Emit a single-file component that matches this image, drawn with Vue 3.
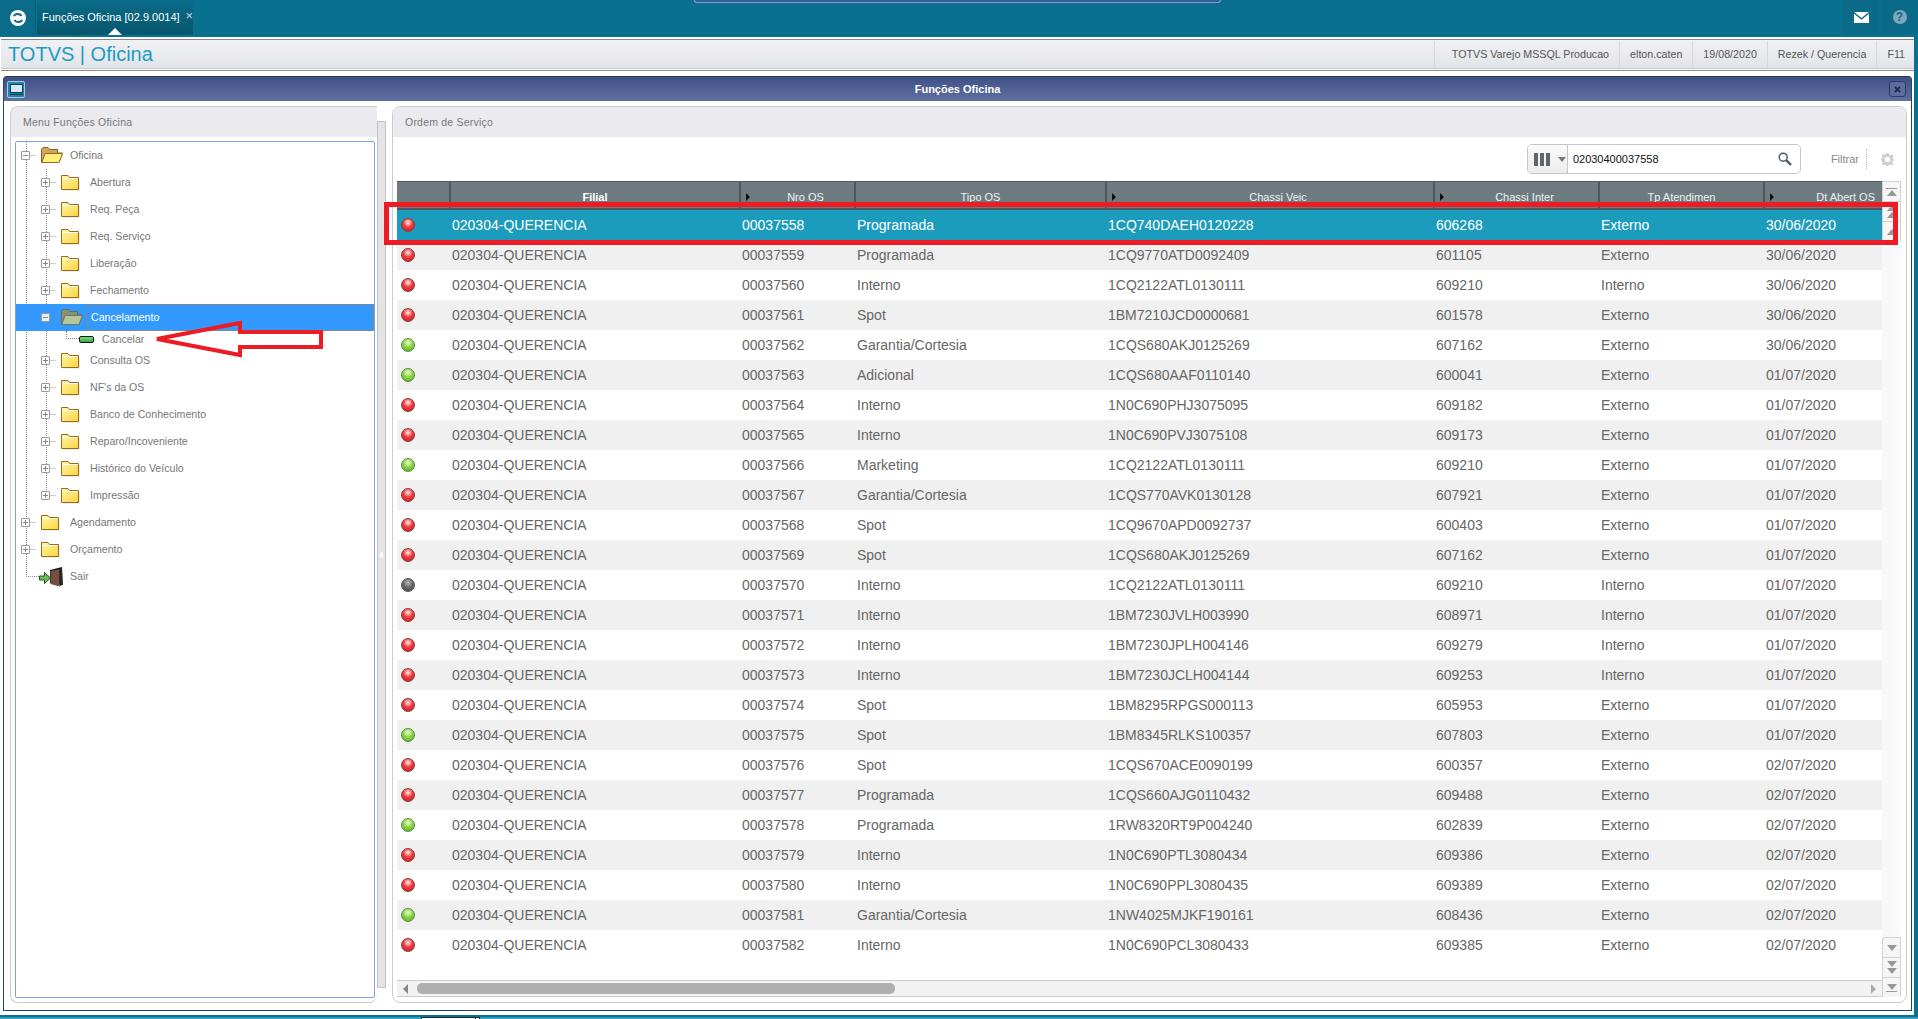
<script setup>
const statusItems = ['TOTVS Varejo MSSQL Producao', 'elton.caten', '19/08/2020', 'Rezek / Querencia', 'F11']

const tree = [
  { label: 'Oficina', level: 1, type: 'open', box: 'minus' },
  { label: 'Abertura', level: 2, type: 'folder', box: 'plus' },
  { label: 'Req. Peça', level: 2, type: 'folder', box: 'plus' },
  { label: 'Req. Serviço', level: 2, type: 'folder', box: 'plus' },
  { label: 'Liberação', level: 2, type: 'folder', box: 'plus' },
  { label: 'Fechamento', level: 2, type: 'folder', box: 'plus' },
  { label: 'Cancelamento', level: 2, type: 'open', box: 'minus', selected: true },
  { label: 'Cancelar', level: 3, type: 'leaf' },
  { label: 'Consulta OS', level: 2, type: 'folder', box: 'plus' },
  { label: "NF's da OS", level: 2, type: 'folder', box: 'plus' },
  { label: 'Banco de Conhecimento', level: 2, type: 'folder', box: 'plus' },
  { label: 'Reparo/Incoveniente', level: 2, type: 'folder', box: 'plus' },
  { label: 'Histórico do Veículo', level: 2, type: 'folder', box: 'plus' },
  { label: 'Impressão', level: 2, type: 'folder', box: 'plus' },
  { label: 'Agendamento', level: 1, type: 'folder', box: 'plus' },
  { label: 'Orçamento', level: 1, type: 'folder', box: 'plus' },
  { label: 'Sair', level: 1, type: 'exit' }
]

const columns = [
  { label: '', cls: '' },
  { label: 'Filial', cls: 'strong' },
  { label: 'Nro OS', cls: 'sorted' },
  { label: 'Tipo OS', cls: '' },
  { label: 'Chassi Veic', cls: 'sorted' },
  { label: 'Chassi Inter', cls: 'sorted' },
  { label: 'Tp Atendimen', cls: '' },
  { label: 'Dt Abert OS', cls: 'sorted last' }
]

const rows = [
  ['r', '00037558', 'Programada', '1CQ740DAEH0120228', '606268', 'Externo', '30/06/2020'],
  ['r', '00037559', 'Programada', '1CQ9770ATD0092409', '601105', 'Externo', '30/06/2020'],
  ['r', '00037560', 'Interno', '1CQ2122ATL0130111', '609210', 'Interno', '30/06/2020'],
  ['r', '00037561', 'Spot', '1BM7210JCD0000681', '601578', 'Externo', '30/06/2020'],
  ['g', '00037562', 'Garantia/Cortesia', '1CQS680AKJ0125269', '607162', 'Externo', '30/06/2020'],
  ['g', '00037563', 'Adicional', '1CQS680AAF0110140', '600041', 'Externo', '01/07/2020'],
  ['r', '00037564', 'Interno', '1N0C690PHJ3075095', '609182', 'Externo', '01/07/2020'],
  ['r', '00037565', 'Interno', '1N0C690PVJ3075108', '609173', 'Externo', '01/07/2020'],
  ['g', '00037566', 'Marketing', '1CQ2122ATL0130111', '609210', 'Externo', '01/07/2020'],
  ['r', '00037567', 'Garantia/Cortesia', '1CQS770AVK0130128', '607921', 'Externo', '01/07/2020'],
  ['r', '00037568', 'Spot', '1CQ9670APD0092737', '600403', 'Externo', '01/07/2020'],
  ['r', '00037569', 'Spot', '1CQS680AKJ0125269', '607162', 'Externo', '01/07/2020'],
  ['k', '00037570', 'Interno', '1CQ2122ATL0130111', '609210', 'Interno', '01/07/2020'],
  ['r', '00037571', 'Interno', '1BM7230JVLH003990', '608971', 'Interno', '01/07/2020'],
  ['r', '00037572', 'Interno', '1BM7230JPLH004146', '609279', 'Interno', '01/07/2020'],
  ['r', '00037573', 'Interno', '1BM7230JCLH004144', '609253', 'Interno', '01/07/2020'],
  ['r', '00037574', 'Spot', '1BM8295RPGS000113', '605953', 'Externo', '01/07/2020'],
  ['g', '00037575', 'Spot', '1BM8345RLKS100357', '607803', 'Externo', '01/07/2020'],
  ['r', '00037576', 'Spot', '1CQS670ACE0090199', '600357', 'Externo', '02/07/2020'],
  ['r', '00037577', 'Programada', '1CQS660AJG0110432', '609488', 'Externo', '02/07/2020'],
  ['g', '00037578', 'Programada', '1RW8320RT9P004240', '602839', 'Externo', '02/07/2020'],
  ['r', '00037579', 'Interno', '1N0C690PTL3080434', '609386', 'Externo', '02/07/2020'],
  ['r', '00037580', 'Interno', '1N0C690PPL3080435', '609389', 'Externo', '02/07/2020'],
  ['g', '00037581', 'Garantia/Cortesia', '1NW4025MJKF190161', '608436', 'Externo', '02/07/2020'],
  ['r', '00037582', 'Interno', '1N0C690PCL3080433', '609385', 'Externo', '02/07/2020']
]
</script>

<template>
  <div class="app">
    <header class="topbar">
      <button class="home" aria-label="Início">
        <svg width="18" height="18" viewBox="0 0 18 18">
          <circle cx="9" cy="9" r="8" fill="#fff" />
          <path d="M5 7.200C5.600 4.800 10.500 3.800 12.600 7" fill="none" stroke="#0a6c89" stroke-width="2" />
          <path d="M13 10.800C12.400 13.200 7.500 14.200 5.400 11" fill="none" stroke="#0a6c89" stroke-width="2" />
        </svg>
      </button>
      <div class="tab">
        <span>Funções Oficina [02.9.0014]</span>
        <span class="tab-x">×</span>
        <i class="tab-notch"></i>
      </div>
      <div class="top-spacer"></div>
      <button class="top-btn" aria-label="Mensagens">
        <svg width="15" height="11" viewBox="0 0 15 11">
          <path d="M0 0H15L7.500 6Z" fill="#fff" />
          <path d="M0 1.800V11H15V1.800L7.500 7.800Z" fill="#fff" />
        </svg>
      </button>
      <button class="top-btn help" aria-label="Ajuda"><span>?</span></button>
      <i class="top-sliver"></i>
    </header>

    <div class="main">
      <div class="statusbar">
        <div class="status-inner">
          <div class="brand">TOTVS | Oficina</div>
          <div class="status-items">
            <span v-for="s in statusItems" :key="s" class="status-item">{{ s }}</span>
          </div>
        </div>
      </div>

      <section class="window">
        <div class="titlebar">
          <span class="win-icon">
            <svg width="13" height="11" viewBox="0 0 13 11">
              <rect x="0.500" y="0.500" width="12" height="8" fill="#d5e9f1" stroke="#0c3f58" />
              <path d="M0 10.500H13" stroke="#0c3f58" stroke-width="1.400" />
            </svg>
          </span>
          <span class="win-title">Funções Oficina</span>
          <span class="win-close">
            <svg width="7" height="7" viewBox="0 0 7 7"><path d="M1 1 6 6M6 1 1 6" stroke="#1d2b4d" stroke-width="1.800" /></svg>
          </span>
        </div>

        <div class="win-body">
          <aside class="panel left">
            <div class="panel-head">Menu Funções Oficina</div>
            <div class="tree">
              <div
                v-for="n in tree"
                :key="n.label"
                class="node"
                :class="['lv' + n.level, 't-' + n.type, { selected: n.selected }]"
              >
                <span v-if="n.box" class="exp" :class="n.box"></span>
                <i v-if="n.box" class="dash"></i>
                <i v-if="n.type === 'leaf' || n.type === 'exit'" class="elbow"></i>

                <span v-if="n.type === 'folder'" class="slot">
                  <svg width="19" height="17" viewBox="0 0 19 17">
                    <defs>
                      <linearGradient id="fy" x1="0" y1="0" x2="1" y2="1">
                        <stop offset="0" stop-color="#fff6a8" />
                        <stop offset="1" stop-color="#fbd53e" />
                      </linearGradient>
                    </defs>
                    <path d="M2 16.500H18.500V5H2Z" fill="#b9b0a0" opacity=".45" />
                    <path d="M.5 15.500V1.500H7L8.500 3.500H17.500V15.500Z" fill="url(#fy)" stroke="#9a6a1c" />
                    <path d="M1.500 4.500H16.500" stroke="#fff" />
                  </svg>
                </span>

                <span v-else-if="n.type === 'open'" class="slot">
                  <svg v-if="!n.selected" width="22" height="17" viewBox="0 0 22 17">
                    <path d="M.5 15.500V2L2 .5H7L8.500 2.500H16.500V6H21.500L18 15.500Z" fill="#d2a55d" stroke="#8a6224" />
                    <path d="M.8 15.500 4 6.500H21.500L18 15.500Z" fill="#fff07a" stroke="#9a6a1c" />
                  </svg>
                  <svg v-else width="22" height="17" viewBox="0 0 22 17">
                    <path d="M.5 15.500V2L2 .5H7L8.500 2.500H16.500V6H21.500L18 15.500Z" fill="#8e8f70" stroke="#666a58" />
                    <path d="M.8 15.500 4 6.500H21.500L18 15.500Z" fill="#b3c79a" stroke="#70755e" />
                  </svg>
                </span>

                <span v-else-if="n.type === 'leaf'" class="leaf-ico"></span>

                <span v-else-if="n.type === 'exit'" class="slot exit">
                  <svg width="24" height="20" viewBox="0 0 24 20">
                    <path d="M11 3 23 0 24 18 11 16Z" fill="#1f1a18" />
                    <path d="M11.500 4 20.500 2.200V19.500L11.500 17Z" fill="#73503f" />
                    <path d="M20.500 2.200 23 1V18L20.500 19.500Z" fill="#2c2622" />
                    <path d="M.5 9H5.500V5.500L11.500 11 5.500 16.500V13H.5Z" fill="#6cbb55" stroke="#1e5a22" />
                  </svg>
                </span>

                <span class="label">{{ n.label }}</span>
              </div>
            </div>
          </aside>

          <div class="rail"><i class="rail-arrow"></i></div>

          <section class="panel right">
            <div class="panel-head">Ordem de Serviço</div>
            <div class="toolbar">
              <div class="search">
                <div class="search-btn">
                  <span class="bars"><i></i><i></i><i></i></span>
                  <i class="caret"></i>
                </div>
                <span class="search-text">02030400037558</span>
                <svg class="lens" width="14" height="14" viewBox="0 0 14 14">
                  <circle cx="5.200" cy="5.200" r="4" fill="none" stroke="#4c5a64" stroke-width="1.500" />
                  <path d="M8.200 8.200 13 13" stroke="#4c5a64" stroke-width="2.400" />
                </svg>
              </div>
              <span class="filter">Filtrar</span>
              <svg class="gear" width="13" height="13" viewBox="0 0 13 13">
                <path d="M5.300 0H7.700L8 1.800 9.400 2.400 10.900 1.300 12.600 3 11.500 4.500 12.100 5.900 13 6.200V7.600L11.900 8.100 11.300 9.500 12.200 11 10.500 12.400 9 11.500 7.800 12 7.500 13H5.500L5.100 12 3.900 11.500 2.300 12.400.7 10.800 1.600 9.400 1 8 0 7.700V5.600L1 5.200 1.600 3.900.7 2.500 2.300.9 3.900 1.800 5 1.300Z" fill="#cfcfcf" />
                <circle cx="6.500" cy="6.500" r="2.700" fill="#fff" />
              </svg>
            </div>

            <div class="grid-wrap">
              <div class="grid-col">
                <div class="grid">
                  <div class="row head">
                    <div v-for="(c, i) in columns" :key="i" class="th" :class="c.cls">{{ c.label }}</div>
                  </div>
                  <div
                    v-for="(r, i) in rows"
                    :key="r[1]"
                    class="row"
                    :class="{ active: i === 0, alt: i % 2 === 1 }"
                  >
                    <div class="td"><span class="dot" :class="r[0]"></span></div>
                    <div class="td">020304-QUERENCIA</div>
                    <div v-for="(v, k) in r.slice(1)" :key="k" class="td">{{ v }}</div>
                  </div>
                </div>
                <div class="hscroll">
                  <i class="arr-l"></i>
                  <div class="thumb"></div>
                  <i class="arr-r"></i>
                </div>
              </div>

              <div class="vscroll">
                <div class="vgroup">
                  <div class="vbtn top"><i class="bar"></i><i class="up"></i></div>
                  <div class="vbtn"><i class="up"></i><i class="up"></i></div>
                  <div class="vbtn"><i class="up"></i></div>
                </div>
                <div class="vgroup">
                  <div class="vbtn"><i class="down"></i></div>
                  <div class="vbtn"><i class="down"></i><i class="down"></i></div>
                  <div class="vbtn"><i class="down"></i><i class="bar"></i></div>
                </div>
              </div>
            </div>
          </section>
        </div>
      </section>
    </div>

    <footer class="footer">
      <i class="foot-a"></i><i class="foot-b"></i>
    </footer>

    <div class="mark-rect"></div>
    <svg class="mark-arrow" width="176" height="44" viewBox="150 318 176 44">
      <polygon points="157,339 240,323 240,332 321,332 321,347 240,347 240,355" fill="none" stroke="#ed1c24" stroke-width="4" />
    </svg>
  </div>
</template>

<style>
html, body { margin: 0; padding: 0; background: #fff; overflow: hidden; }
</style>

<style scoped>
* { box-sizing: border-box; }
i { display: block; }
button { border: 0; padding: 0; margin: 0; background: none; }

.app {
  position: relative;
  width: 1918px;
  height: 1019px;
  display: flex;
  flex-direction: column;
  font-family: "Liberation Sans", Arial, sans-serif;
  background: #fff;
  overflow: hidden;
}

/* top bar */
.topbar {
  position: relative;
  flex: none;
  height: 37px;
  display: flex;
  background: #0a7090;
}
.home {
  width: 36px;
  height: 35px;
  display: flex;
  align-items: center;
  justify-content: center;
  background: #0a6c89;
  border-right: 1px solid #0a5f79;
}
.tab {
  position: relative;
  margin-left: 1px;
  width: 156px;
  height: 35px;
  display: flex;
  align-items: center;
  padding: 0 0 1px 5px;
  background: linear-gradient(#0a6c8a, #07566c);
  color: #fff;
  font-size: 11px;
  white-space: nowrap;
}
.tab-x { margin-left: 6px; margin-top: -3px; color: #c9dbe2; font-size: 13px; }
.tab-notch {
  position: absolute;
  left: 71px;
  bottom: 0;
  width: 0; height: 0;
  border-left: 7px solid transparent;
  border-right: 7px solid transparent;
  border-bottom: 7px solid #fff;
}
.top-spacer { flex: 1; }
.top-btn {
  width: 36px;
  height: 34px;
  margin-right: 2px;
  display: flex;
  align-items: center;
  justify-content: center;
  background: #0a6a87;
}
.top-btn.help { margin-right: 0; width: 37px; }
.help span {
  width: 14px; height: 14px;
  border-radius: 50%;
  background: #7ea9b9;
  color: #0a6a87;
  font: bold 12px/14px "Liberation Sans", sans-serif;
  text-align: center;
}
.top-sliver {
  position: absolute;
  left: 694px;
  top: 0;
  width: 527px;
  height: 3px;
  background: #2f5f9d;
  border: 1px solid #8a9fc0;
  border-top: 0;
  border-radius: 0 0 3px 3px;
}

/* main column */
.main {
  flex: 1;
  min-height: 0;
  display: flex;
  flex-direction: column;
  border-right: 4px solid #0a7090;
}
.statusbar {
  flex: none;
  margin: 2px 0 5px 1px;
  height: 32px;
  padding-bottom: 1px;
  background: #fff;
  border-top: 1px solid #888;
  border-bottom: 1px solid #888;
}
.status-inner {
  height: 29px;
  display: flex;
  align-items: center;
  justify-content: space-between;
  background: linear-gradient(#f0f1f5, #e2e5e8);
  border-bottom: 1px solid #c8c8c8;
}
.brand {
  padding-left: 7px;
  color: #1f9cc2;
  font-size: 20px;
  line-height: 26px;
}
.status-items { display: flex; height: 26px; align-items: stretch; }
.status-item {
  display: flex;
  align-items: center;
  padding: 0 10px;
  border-left: 1px solid #d5d7da;
  color: #555;
  font-size: 10.700px;
  white-space: nowrap;
}
.status-item:first-child { padding-left: 17px; }
.status-item:last-child { padding-right: 9px; }

/* window */
.window {
  flex: 1;
  min-height: 0;
  margin: 0 2px 4px 3px;
  display: flex;
  flex-direction: column;
  border: 1px solid #17486f;
  border-top-color: #333;
  border-radius: 4px 4px 0 0;
  background: #fff;
}
.titlebar {
  position: relative;
  flex: none;
  height: 24px;
  display: flex;
  align-items: center;
  justify-content: center;
  background: linear-gradient(#3e5189, #616f9f);
}
.win-title { color: #fff; font-size: 11px; font-weight: bold; }
.win-icon {
  position: absolute;
  left: 3px;
  top: 4px;
  width: 18px; height: 17px;
  display: flex; align-items: center; justify-content: center;
  background: #1b88ab;
  border: 1px solid #a9cddb;
  border-radius: 2px;
}
.win-close {
  position: absolute;
  right: 5px;
  top: 4px;
  width: 17px; height: 16px;
  display: flex; align-items: center; justify-content: center;
  background: #5d6c9d;
  border: 1px solid #2b3b68;
  border-radius: 3px;
}
.win-body {
  flex: 1;
  min-height: 0;
  display: flex;
  padding: 5px 4px 7px 6px;
}

.panel {
  display: flex;
  flex-direction: column;
  border: 1px solid #ccc;
  border-radius: 8px;
  background: #fff;
}
.panel-head {
  flex: none;
  height: 30px;
  padding-left: 12px;
  display: flex;
  align-items: center;
  background: #ebebef;
  border-radius: 7px 7px 0 0;
  color: #777;
  font-size: 10.500px;
  letter-spacing: .02em;
}
.left { width: 367px; flex: none; border-right: 0; border-top-right-radius: 0; }
.left .panel-head { border-top-right-radius: 0; }
.right { width: 1515px; flex: none; margin-left: 6px; }

/* tree */
.tree {
  position: relative;
  flex: 1;
  margin: 4px 2px 4px 4px;
  border: 1px solid #7ba3e6;
  border-radius: 2px;
  background: #fff;
}
.tree::before {
  content: "";
  position: absolute;
  left: 10px;
  top: 0;
  height: 435px;
  border-left: 1px dotted #888;
}
.tree::after {
  content: "";
  position: absolute;
  left: 30px;
  top: 27px;
  height: 327px;
  border-left: 1px dotted #888;
}
.node {
  position: relative;
  z-index: 1;
  height: 27px;
  display: flex;
  align-items: center;
  color: #777;
  font-size: 10.600px;
  white-space: nowrap;
}
.label { margin-top: -1px; }
.lv1 { padding-left: 5px; }
.lv2 { padding-left: 25px; }
.exp {
  position: relative;
  flex: none;
  width: 9px;
  height: 9px;
  border: 1px solid #999;
  background: #fff;
  border-radius: 1px;
}
.exp::before {
  content: "";
  position: absolute;
  left: 1px; top: 3px;
  width: 5px; height: 1px;
  background: #888;
}
.exp.plus::after {
  content: "";
  position: absolute;
  left: 3px; top: 1px;
  width: 1px; height: 5px;
  background: #888;
}
.dash {
  flex: none;
  width: 11px;
  height: 0;
  border-top: 1px dotted #888;
  transform: scaleX(.55);
  transform-origin: left;
}
.slot { flex: none; width: 29px; display: flex; align-items: center; }
.t-leaf {
  height: 16px;
  padding-left: 50px;
}
.t-leaf .elbow {
  flex: none;
  width: 13px;
  height: 8px;
  margin-top: -8px;
  border-left: 1px dotted #888;
  border-bottom: 1px dotted #888;
}
.leaf-ico {
  flex: none;
  width: 15px;
  height: 7px;
  margin-right: 8px;
  border: 1px solid #111;
  border-radius: 2px;
  background: linear-gradient(#7fe06f, #2fa84c);
}
.t-exit { padding-left: 10px; }
.t-exit .elbow {
  flex: none;
  width: 13px;
  height: 0;
  border-top: 1px dotted #888;
}
.exit { width: 31px; }
.selected { background: #3399ff; color: #fff; }
.selected .label {
  flex: 1;
  align-self: stretch;
  display: flex;
  align-items: center;
  margin: 0 0 0 -3px;
  padding: 0 0 1px 3px;
  border: 1px dotted #c77c1e;
}
.selected .exp { background: #e6eef6; }

/* rail */
.rail {
  position: relative;
  flex: none;
  width: 9px;
  margin-top: 15px;
  margin-bottom: 15px;
  background: #e4e4e4;
  border: 1px solid #c4c4c4;
}
.rail-arrow {
  position: absolute;
  left: 1px;
  top: 429px;
  width: 0; height: 0;
  border-top: 4px solid transparent;
  border-bottom: 4px solid transparent;
  border-right: 4px solid #fff;
}

/* right panel */
.toolbar {
  flex: none;
  height: 44px;
  display: flex;
  align-items: center;
  justify-content: flex-end;
  padding-right: 12px;
}
.search {
  width: 274px;
  height: 30px;
  display: flex;
  align-items: center;
  border: 1px solid #c6c6c6;
  border-radius: 5px;
  background: #fff;
}
.search-btn {
  width: 40px;
  height: 100%;
  flex: none;
  display: flex;
  align-items: center;
  padding-left: 6px;
  gap: 8px;
  border-right: 1px solid #c6c6c6;
  border-radius: 4px 0 0 4px;
  background: linear-gradient(#fafafa, #ececec);
}
.bars { display: flex; gap: 2px; }
.bars i { width: 4px; height: 13px; background: #5d6770; }
.caret {
  width: 0; height: 0;
  border-left: 4px solid transparent;
  border-right: 4px solid transparent;
  border-top: 5px solid #6f7a82;
}
.search-text { flex: 1; padding-left: 5px; color: #111; font-size: 11px; }
.lens { margin-right: 8px; }
.filter {
  margin-left: 30px;
  padding-right: 7px;
  color: #888;
  font-size: 11px;
  line-height: 16px;
  height: 20px;
  display: flex;
  align-items: center;
  border-right: 1px dotted #bbb;
}
.gear { margin-left: 14px; }

.grid-wrap {
  flex: 1;
  min-height: 0;
  display: flex;
  padding: 0 5px 5px 4px;
}
.grid-col {
  width: 1485px;
  flex: none;
  display: flex;
  flex-direction: column;
}
.grid { flex: 1; min-height: 0; }
.row {
  display: grid;
  grid-template-columns: 52px 290px 115px 251px 328px 165px 165px 119px;
  height: 30px;
  color: #666;
  font-size: 14px;
  align-items: center;
}
.row.alt { background: #f0f0f0; }
.row.active { background: #1c9cbd; color: #fff; }
.td { padding-left: 3px; white-space: nowrap; }
.td:first-child { padding-left: 4px; display: flex; }
.dot {
  width: 14px;
  height: 14px;
  border-radius: 50%;
  border: 1px solid #777;
}
.dot.r { background: radial-gradient(circle at 50% 30%, #ffc9c9 0 10%, #ee3a3f 45%, #c41a20 100%); border-color: #8a3a3c; }
.dot.g { background: radial-gradient(circle at 50% 30%, #d9f7b3 0 10%, #80d040 50%, #5aa828 100%); border-color: #5f8c44; }
.dot.k { background: radial-gradient(circle at 50% 30%, #a8a8a8 0 10%, #646464 50%, #474747 100%); border-color: #555; }

.row.head {
  height: 29px;
  background: #6e7b80;
  border-top: 1px solid #4f5a5f;
  border-bottom: 2px solid #4d585c;
  align-items: stretch;
}
.th {
  display: flex;
  align-items: center;
  justify-content: center;
  position: relative;
  padding-top: 3px;
  color: #eef1f2;
  font-size: 11px;
  border-left: 2px solid #4d585c;
  white-space: nowrap;
}
.th:first-child { border-left: 0; }
.th.strong { font-weight: bold; color: #fff; }
.th.sorted { padding-left: 16px; }
.th.sorted::before {
  content: "";
  position: absolute;
  left: 5px;
  top: 11px;
  width: 0; height: 0;
  border-top: 4px solid transparent;
  border-bottom: 4px solid transparent;
  border-left: 4px solid #111;
}
.th.last { justify-content: flex-end; padding-right: 7px; }

.hscroll {
  flex: none;
  height: 17px;
  display: flex;
  align-items: center;
  padding: 0 6px;
  background: #f2f2f2;
  border-top: 1px solid #ccc;
  border-bottom: 1px solid #ccc;
}
.arr-l, .arr-r {
  width: 0; height: 0;
  border-top: 5px solid transparent;
  border-bottom: 5px solid transparent;
}
.arr-l { border-right: 5px solid #888; }
.arr-r { border-left: 5px solid #aaa; margin-left: auto; }
.thumb {
  width: 478px;
  height: 11px;
  margin-left: 9px;
  border-radius: 5px;
  background: #b0b0b0;
}
.vscroll {
  width: 19px;
  flex: none;
  display: flex;
  flex-direction: column;
  justify-content: space-between;
  background: linear-gradient(90deg, #f7f7fa, #fbfbfd);
}
.vbtn {
  width: 19px;
  height: 20px;
  display: flex;
  flex-direction: column;
  align-items: center;
  justify-content: center;
  gap: 1px;
  border: 1px solid #d2d2d2;
  border-width: 1px 1px 0 1px;
  background: #f6f6f6;
}
.vgroup:last-child .vbtn:first-child { border-radius: 4px 0 0 0; }
.up, .down {
  width: 0; height: 0;
  border-left: 5px solid transparent;
  border-right: 5px solid transparent;
}
.up { border-bottom: 6px solid #999; }
.down { border-top: 6px solid #999; }
.bar { width: 11px; height: 1px; background: #999; }

/* footer */
.footer {
  flex: none;
  height: 4px;
  display: flex;
  padding-left: 421px;
  background: linear-gradient(#0a7090 0 50%, #2f9dbd 50%);
}
.foot-a { width: 55px; height: 2px; margin-top: 2px; border: 1px solid #1a2630; border-bottom: 0; background: #fff; }
.foot-b { width: 4px; height: 2px; margin-top: 2px; border: 1px solid #1a2630; border-bottom: 0; border-left: 0; background: #fff; }

/* annotations drawn over the screenshot */
.mark-rect {
  position: absolute;
  left: 384px;
  top: 202px;
  width: 1514px;
  height: 43px;
  border: 5px solid #ed1c24;
  pointer-events: none;
}
.mark-arrow {
  position: absolute;
  left: 150px;
  top: 318px;
  pointer-events: none;
  z-index: 3;
}
</style>
